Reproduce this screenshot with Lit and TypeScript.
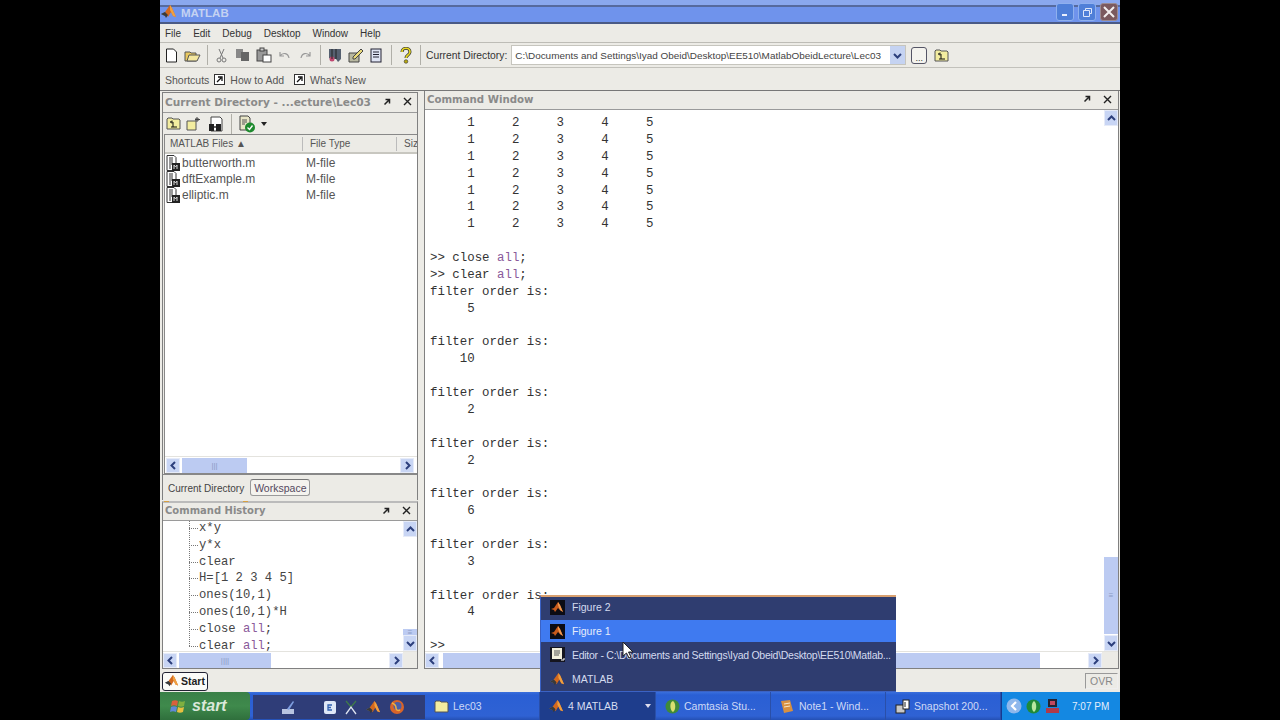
import { LitElement, html, css, svg } from "lit";
import { customElement } from "lit/decorators.js";

const matlab = (s = 16) => html`<svg class="ic" width=${s} height=${s} viewBox="0 0 16 16"><path d="M0 10l4-2 2 2-2 2z" fill="#6a7a8a"/><path d="M4 8l5-7 2 3 4 9-3-1-2-4-3 5-1-2z" fill="#d2681e"/><path d="M9 1l2 3 4 9-3-1-3-6z" fill="#f0a040"/><path d="M4 8l3 3-2 3-1-2-4-2z" fill="#3a3a3a"/></svg>`;
const figIcon = () => html`<svg class="ic" width="15" height="15" viewBox="0 0 15 15"><rect width="15" height="15" fill="#0c0c14"/><path d="M1 9l3-1 4-6 2 3 3 7-3-2-2-2-3 4-1-2z" fill="#c85a1c"/><path d="M8 2l2 3 3 7-3-2-2-5z" fill="#f09a50"/></svg>`;
const edIcon = () => html`<svg class="ic" width="15" height="15" viewBox="0 0 15 15"><rect width="15" height="15" fill="#15151f"/><rect x="2" y="1" width="10" height="11" fill="#f2efdc"/><path d="M4 4h6M4 6h6M4 8h5" stroke="#555" fill="none"/><path d="M11 13h3v-2" stroke="#fff" fill="none"/></svg>`;
const fileIcon = () => html`<svg class="ic" width="16" height="16" viewBox="0 0 16 16"><path d="M2 .5h7l2 2v13H2z" fill="#fff" stroke="#333"/><path d="M4 3h4M4 5h4M4 7h4M4 9h3M4 11h2M4 13h2" stroke="#333"/><rect x="7" y="8" width="8" height="8" fill="#222"/><path d="M9 14v-4l1.500 2 1.500-2v4" stroke="#d8d8d8" fill="none"/></svg>`;
const folder = (up = true, s = 15) => html`<svg class="ic" width=${s} height=${s} viewBox="0 0 15 15"><path d="M1 3l1-1h4l1 1h6l1 1v9H1z" fill="#f3eda0" stroke="#555"/>${up ? svg`<path d="M7 11V6H4.500M4.500 6L6 4.500M4.500 6L6 7.500" stroke="#111" fill="none"/><path d="M5 11h6" stroke="#111"/>` : ""}</svg>`;
const newFolder = () => html`<svg class="ic" width="15" height="15" viewBox="0 0 15 15"><path d="M1 5h9v9H1z" fill="#f3eda0" stroke="#555"/><path d="M11 1v5M9 3.500h5M9.500 2l3 3M12.500 2l-3 3" stroke="#444"/></svg>`;
const binoc = () => html`<svg class="ic" width="16" height="16" viewBox="0 0 16 16"><path d="M3 1h9l2 2v12H3z" fill="#fff" stroke="#444"/><path d="M1 8h5v7H1zM8 8h5v7H8z" fill="#222"/><path d="M6 10h2v2H6z" fill="#666"/></svg>`;
const checkDoc = () => html`<svg class="ic" width="18" height="18" viewBox="0 0 18 18"><path d="M2 1h8l2 2v12H2z" fill="#e8e6c8" stroke="#444"/><path d="M4 5h5M4 7h5M4 9h3" stroke="#555"/><circle cx="12" cy="12.500" r="5" fill="#1e8a2e"/><path d="M9.500 12.500l2 2 3-4" stroke="#fff" stroke-width="1.300" fill="none"/></svg>`;
const undock = () => html`<svg class="ic" width="8" height="8" viewBox="0 0 8 8"><path d="M1.500 6.500L6 2M2.500 1.500H6.500V5.500" stroke="#222" stroke-width="1.500" fill="none"/></svg>`;
const closeX = () => html`<svg class="ic" width="9" height="9" viewBox="0 0 9 9"><path d="M1 1l7 7M8 1L1 8" stroke="#222" stroke-width="1.400"/></svg>`;
const chev = (d: string) => {
  const p: Record<string, string> = { l: "M6 1L2.500 4.500 6 8", r: "M3 1l3.500 3.500L3 8", u: "M1 6l3.500-3.500L8 6", d: "M1 3l3.500 3.500L8 3" };
  return html`<svg class="ic" width="9" height="9" viewBox="0 0 9 9"><path d=${p[d]} stroke="#2c3f7c" stroke-width="2" fill="none"/></svg>`;
};
const link = () => html`<svg class="ic" width="11" height="11" viewBox="0 0 11 11"><rect x=".5" y=".5" width="10" height="10" fill="#fff" stroke="#333"/><path d="M3 8l4-4M4 3h4v4" stroke="#111" stroke-width="1.300" fill="none"/></svg>`;

const row = "     1     2     3     4     5";
const block = (n: string) => html`<div>filter order is:</div><div>${n}</div><div>&nbsp;</div>`;

@customElement("app-root")
export class AppRoot extends LitElement {
  static styles = css`
    :host { display: block; width: 1280px; height: 720px; background: #000; overflow: hidden; }
    .ic { display: block; flex: none; }
    .screen { position: relative; width: 960px; height: 720px; margin: 0 auto; background: #ecebe6; display: flex; flex-direction: column; font: 11px "Liberation Sans", sans-serif; color: #333; }
    .title { height: 24px; flex: none; box-sizing: border-box; background: linear-gradient(#8aa8ee 0, #8aa8ee 5px, #566a9e 5px, #566a9e 7px, #6f93ec 7px, #6f93ec 22px, #4a5a85 22px); display: flex; align-items: center; padding: 0 2px 0 1px; gap: 4px; color: #c4d2f2; font: bold 11.500px "Liberation Sans", sans-serif; }
    .title .name { flex: 1; padding-top: 2px; }
    .wbtn { width: 18px; height: 18px; border-radius: 3px; background: #4f7fd8; border: 1px solid #8fb0ee; box-sizing: border-box; display: flex; align-items: center; justify-content: center; }
    .wbtn.x { background: #7b5a5e; border-color: #9a8a90; }
    .menu { height: 19px; flex: none; display: flex; align-items: center; gap: 12px; padding: 0 5px; font-size: 10px; color: #333; border-bottom: 1px solid #bdbcb6; box-sizing: border-box; }
    .tools { height: 25px; flex: none; display: flex; align-items: center; padding: 0 3px; gap: 4px; border-bottom: 1px solid #c2c1bb; box-sizing: border-box; font-size: 10.300px; }
    .sep { width: 1px; height: 20px; background: #b0afa8; flex: none; margin: 0 1.500px; }
    .tico { width: 17px; height: 17px; flex: none; display: flex; align-items: center; justify-content: center; }
    .dir { width: 395px; height: 20px; margin-left: 0; background: #fff; border: 1px solid #c6c5be; box-sizing: border-box; display: flex; align-items: center; padding-left: 3px; white-space: nowrap; overflow: hidden; font-size: 9.950px; color: #444; justify-content: space-between; flex: none; }
    .combo { width: 15px; height: 18px; background: #c5d3f2; display: flex; align-items: center; justify-content: center; flex: none; }
    .dots { width: 14px; height: 15px; margin-left: 1px; border: 1px solid #556; border-radius: 3px; background: #f4f3ee; font-size: 9px; display: flex; align-items: flex-end; justify-content: center; flex: none; }
    .upf { margin-left: 3px; }
    .short { height: 23px; flex: none; display: flex; align-items: center; gap: 5px; padding: 1px 5px 0; color: #555; border-bottom: 1px solid #777; box-sizing: border-box; font-size: 10.500px; }
    .short .gap { width: 0; }
    .main { flex: 1; min-height: 0; display: flex; gap: 6px; padding: 0 1px 1px 2px; }
    .left { width: 256px; flex: none; display: flex; flex-direction: column; padding-top: 1px; box-sizing: border-box; }
    .right { flex: 1; min-width: 0; display: flex; flex-direction: column; border: 1px solid #808080; border-top: 0; box-sizing: border-box; }
    .head { height: 19px; flex: none; box-sizing: border-box; display: flex; align-items: center; padding: 0 6px 2px 2px; font: bold 10.200px "DejaVu Sans", sans-serif; color: #8a8a8a; gap: 12px; border-bottom: 1px solid #9a9a9a; white-space: nowrap; overflow: hidden; }
    .head.cd { height: 20px; font-size: 10.600px; }
    .head.ch { height: 18px; font-size: 10px; }
    .head .t { flex: 1; }
    .cwin { flex: 1; min-height: 0; display: flex; background: #fff; }
    .cmd { flex: 1; overflow: hidden; padding: 5px 0 0 5px; font: 12.420px/16.870px "Liberation Mono", monospace; color: #333; white-space: pre; }
    .cmd .p, .hist .p { color: #8a5a9a; }
    .vbar { width: 14px; flex: none; display: flex; flex-direction: column; background: #fff; }
    .vbar .grow { flex: 1; }
    .btn { width: 14px; height: 16px; flex: none; background: #c8d5f4; border: 1px solid #e6ebf8; box-sizing: border-box; display: flex; align-items: center; justify-content: center; }
    .thumb { background: #bccbf2; display: flex; align-items: center; justify-content: center; color: #8a9ac4; font-size: 8px; flex: none; }
    .hbar { height: 17px; flex: none; display: flex; background: #fff; align-items: center; border-top: 1px solid #e4e3de; box-sizing: border-box; }
    .hbar.tbl { padding: 0 3px 0 1px; }
    .hbar .grow { flex: 1; }
    .hbar .btn { height: 15px; }
    .hbar .thumb { height: 15px; margin-left: 2px; }
    .hbar .thumb.wide { margin-left: 4px; }
    .corner { width: 16px; height: 16px; flex: none; background: #ecebe6; }
    .corner.n { width: 14px; }
    .filepanel { height: 408px; flex: none; display: flex; flex-direction: column; border: 1px solid #808080; box-sizing: border-box; border-bottom: 0; }
    .ptools { height: 21px; flex: none; display: flex; align-items: center; gap: 5px; padding: 0 3px; }
    .shift { margin-left: 2px; }
    .table { flex: 1; min-height: 0; margin-left: 1px; display: flex; flex-direction: column; background: #fff; border: 1px solid #888; border-right: 0; }
    .thead { height: 19px; flex: none; box-sizing: border-box; background: #ecebe6; border-bottom: 2px solid #c8c7c0; display: grid; grid-template-columns: 138px 94px 1fr; align-items: center; font-size: 10px; color: #555; }
    .thead div { padding-left: 7px; border-right: 1px solid #bbb; white-space: nowrap; overflow: hidden; height: 14px; line-height: 14px; }
    .thead div:first-child { padding-left: 5px; }
    .thead div:last-child { border: 0; }
    .flist { flex: 1; padding-top: 1px; }
    .frow { height: 16px; display: grid; grid-template-columns: 141px 1fr; align-items: center; font-size: 12px; color: #555; }
    .fname { display: flex; align-items: center; gap: 1px; }
    .tabs { height: 26px; flex: none; display: flex; align-items: flex-start; padding-left: 1px; border-top: 1px solid #888; font-size: 10px; color: #444; box-sizing: border-box; }
    .tab { height: 20px; padding: 1px 4px 0 4px; box-sizing: border-box; white-space: nowrap; margin-top: 7px; position: relative; }
    .tab:not(.off)::after { content: ""; position: absolute; left: 0; right: 0; bottom: 0; height: 1px; background: linear-gradient(90deg, #d8a040 5px, transparent 5px, transparent calc(100% - 5px), #d8a040 calc(100% - 5px)); }
    .tab.off { border: 1px solid #9a9a9a; border-radius: 3px; border-top: 1px solid #777; padding: 2px 3px; height: 17px; background: #f4f3ee; margin: 4px 0 0 2px; color: #554a60; font-size: 10.500px; }
    .histpanel { flex: 1; min-height: 0; display: flex; flex-direction: column; border: 1px solid #808080; border-top: 2px solid #bbb; box-sizing: border-box; margin-top: 1px; }
    .hwin { flex: 1; min-height: 0; display: flex; background: #fff; }
    .hist { flex: 1; overflow: hidden; font: 12.200px/16.800px "Liberation Mono", monospace; color: #444; padding-left: 36px; position: relative; }
    .hist div { position: relative; white-space: pre; }
    .hist div:first-of-type { margin-top: -1px; }
    .hist div::before { content: ""; position: absolute; left: -10px; top: 8px; width: 9px; border-top: 1px dotted #777; }
    .tree { position: absolute; left: 26px; top: 0; bottom: 5px; border-left: 1px dotted #777; }
    .status { height: 22px; flex: none; display: flex; align-items: center; justify-content: space-between; padding: 0 2px 0 2px; box-sizing: border-box; }
    .startbtn { height: 19px; width: 46px; box-sizing: border-box; border: 1px solid #223; border-radius: 3px; background: #fbfbf8; display: flex; align-items: center; gap: 2px; padding-left: 2px; font-weight: bold; font-size: 10.500px; color: #222; }
    .ovr { width: 33px; height: 16px; box-sizing: border-box; border: 1px solid #999; border-right-color: #eee; border-bottom-color: #eee; font-size: 10.500px; color: #888; display: flex; align-items: center; justify-content: center; }
    .task { height: 28px; flex: none; display: flex; background: linear-gradient(#3a6fdc 0, #2a5fd4 3px, #2f62d4 24px, #2450b4); color: #cfdaf6; font-size: 10.500px; align-items: stretch; }
    .start { width: 90px; flex: none; background: linear-gradient(#3a8048, #3f8a4c 50%, #2f6f3c); display: flex; align-items: center; gap: 5px; padding-left: 10px; box-sizing: border-box; color: #dbe8da; font: italic bold 16px "Liberation Sans", sans-serif; border-radius: 0 4px 4px 0; }
    .ql { width: 172px; flex: none; margin: 3px 0 1px 3px; background: #2f3d78; display: flex; align-items: center; gap: 8px; padding-left: 28px; box-sizing: border-box; }
    .qgap { width: 11px; flex: none; }
    .tb { flex: none; width: 115px; display: flex; align-items: center; gap: 4px; padding-left: 9px; box-sizing: border-box; white-space: nowrap; border-right: 1px solid #2a4fa8; overflow: hidden; }
    .tb.act { background: #1e3d8c; width: 116px; color: #d7def0; padding-right: 4px; }
    .tb.act .grow { flex: 1; }
    .tray { flex: 1; background: #1488e2; display: flex; align-items: center; gap: 4px; padding-left: 4px; box-sizing: border-box; color: #e4eefc; font-size: 10px; border-left: 1px solid #153a90; }
    .tray .time { margin-left: 8px; white-space: nowrap; }
    .popup { position: absolute; left: 380px; top: 595px; width: 356px; height: 97px; background: #2f3d70; border-top: 2px solid #d8a070; border-left: 1px solid #3b62c4; border-bottom: 1px solid #3b62c4; box-sizing: border-box; color: #d4dbef; font-size: 10.500px; display: flex; flex-direction: column; }
    .pi { height: 24px; flex: none; box-sizing: border-box; display: flex; align-items: center; gap: 7px; padding-left: 9px; white-space: nowrap; }
    .pi.first { height: 23px; padding-bottom: 3px; }
    .pi.sel { height: 22px; background: #3f7af0; color: #e6ecfb; }
    .pi.ed { height: 25px; letter-spacing: -.27px; }
    .cursor { position: absolute; left: 462px; top: 641px; }
  `;

  render() {
    return html`<div class="screen">
      <div class="title">${matlab(16)}<span class="name">MATLAB</span>
        <span class="wbtn"><svg width="9" height="9" viewBox="0 0 9 9"><rect x="1" y="6" width="5" height="2" fill="#e8eefc"/></svg></span>
        <span class="wbtn"><svg width="11" height="11" viewBox="0 0 11 11"><path d="M3.500 3V1.500h6v5H8M1.500 3.500h6v6h-6z" stroke="#dde6fa" fill="none"/></svg></span>
        <span class="wbtn x"><svg width="12" height="12" viewBox="0 0 12 12"><path d="M1 1l10 10M11 1L1 11" stroke="#f2eeee" stroke-width="2"/></svg></span>
      </div>
      <div class="menu"><span>File</span><span>Edit</span><span>Debug</span><span>Desktop</span><span>Window</span><span>Help</span></div>
      <div class="tools">
        <span class="tico"><svg width="13" height="15" viewBox="0 0 13 15"><path d="M1.500 1h7l3 3v10h-10z" fill="#fff" stroke="#222"/></svg></span>
        <span class="tico"><svg width="17" height="15" viewBox="0 0 17 15"><path d="M1 4h5l1 1h5v8H1z" fill="#e8c860" stroke="#555"/><path d="M3 13l2-6h11l-3 6z" fill="#f4e8a0" stroke="#555"/></svg></span>
        <span class="sep"></span>
        <span class="tico"><svg width="11" height="15" viewBox="0 0 11 15"><path d="M3 1l4 9M8 1L4 10" stroke="#777" fill="none"/><circle cx="3" cy="12" r="2" stroke="#777" fill="none"/><circle cx="8" cy="12" r="2" stroke="#777" fill="none"/></svg></span>
        <span class="tico"><svg width="16" height="14" viewBox="0 0 16 14"><path d="M1 1h7v9H1z" fill="#888"/><path d="M6 4h8v9H6z" fill="#666"/></svg></span>
        <span class="tico"><svg width="16" height="16" viewBox="0 0 16 16"><rect x="1" y="3" width="10" height="11" fill="#999" stroke="#444"/><rect x="4" y="1" width="4" height="3" fill="#ccc" stroke="#444"/><rect x="7" y="8" width="8" height="7" fill="#fff" stroke="#444"/></svg></span>
        <span class="tico"><svg width="13" height="10" viewBox="0 0 13 10"><path d="M2 2v4h4M2 6c3-4 8-3 9 2" stroke="#999" stroke-width="1.200" fill="none"/></svg></span>
        <span class="tico"><svg width="13" height="10" viewBox="0 0 13 10"><path d="M11 2v4H7M11 6C8 2 3 3 2 8" stroke="#999" stroke-width="1.200" fill="none"/></svg></span>
        <span class="sep"></span>
        <span class="tico"><svg width="14" height="15" viewBox="0 0 14 15"><path d="M1 1h12v10l-3 3-2-3H3l-2-1z" fill="#556070"/><circle cx="4" cy="11" r="2.500" fill="#c04870"/><path d="M4 1v10M8 1v10" stroke="#222"/></svg></span>
        <span class="tico"><svg width="16" height="15" viewBox="0 0 16 15"><path d="M1 5h10v9H1z" fill="#b8b8a0" stroke="#444"/><path d="M5 9l8-8 2 2-8 8H5z" fill="#e8d878" stroke="#444"/></svg></span>
        <span class="tico"><svg width="13" height="15" viewBox="0 0 13 15"><rect x="1" y="1" width="10" height="13" fill="#dfe4f4" stroke="#223"/><path d="M3 4h6M3 6.500h6M3 9h6" stroke="#223"/></svg></span>
        <span class="sep"></span>
        <span class="tico"><svg width="12" height="17" viewBox="0 0 12 17"><path d="M2 5c0-5 8-5 8 0 0 3-4 3-4 6" stroke="#333" stroke-width="3" fill="none"/><path d="M2 5c0-5 8-5 8 0 0 3-4 3-4 6" stroke="#e8d820" stroke-width="1.600" fill="none"/><circle cx="6" cy="14.500" r="1.800" fill="#b8a810" stroke="#333" stroke-width=".6"/></svg></span>
        <span class="sep"></span>
        <span>Current Directory:</span>
        <div class="dir"><span>C:\\Documents and Settings\\Iyad Obeid\\Desktop\\EE510\\MatlabObeidLecture\\Lec03</span><span class="combo">${chev("d")}</span></div>
        <span class="dots">...</span>
        <span class="upf">${folder(true, 15)}</span>
      </div>
      <div class="short"><span>Shortcuts</span>${link()}<span>How to Add</span><span class="gap"></span>${link()}<span>What's New</span></div>
      <div class="main">
        <div class="left">
          <div class="filepanel">
            <div class="head cd"><span class="t">Current Directory - ...ecture\\Lec03</span>${undock()}${closeX()}</div>
            <div class="ptools">${folder(true)}${newFolder()}<span class="shift">${binoc()}</span><span class="sep"></span>${checkDoc()}<svg width="6" height="4" viewBox="0 0 6 4"><path d="M0 0h6L3 4z" fill="#222"/></svg></div>
            <div class="table">
              <div class="thead"><div>MATLAB Files ▲</div><div>File Type</div><div>Siz</div></div>
              <div class="flist">
                ${["butterworth.m", "dftExample.m", "elliptic.m"].map(n => html`<div class="frow"><span class="fname">${fileIcon()}${n}</span><span>M-file</span></div>`)}
              </div>
              <div class="hbar tbl"><span class="btn">${chev("l")}</span><span class="thumb" style="width:65px">|||</span><span class="grow"></span><span class="btn">${chev("r")}</span></div>
            </div>
            <div class="tabs"><span class="tab">Current Directory</span><span class="tab off">Workspace</span></div>
          </div>
          <div class="histpanel">
            <div class="head ch"><span class="t">Command History</span>${undock()}${closeX()}</div>
            <div class="hwin">
              <div class="hist"><span class="tree"></span>${["x*y", "y*x", "clear", "H=[1 2 3 4 5]", "ones(10,1)", "ones(10,1)*H"].map(l => html`<div>${l}</div>`)}<div>close <span class="p">all</span>;</div><div>clear <span class="p">all</span>;</div></div>
              <div class="vbar"><span class="btn">${chev("u")}</span><span class="grow"></span><span class="thumb" style="height:6px">≡</span><span class="btn">${chev("d")}</span></div>
            </div>
            <div class="hbar"><span class="btn">${chev("l")}</span><span class="thumb" style="width:92px">||||</span><span class="grow"></span><span class="btn">${chev("r")}</span><span class="corner n"></span></div>
          </div>
        </div>
        <div class="right">
          <div class="head"><span class="t">Command Window</span>${undock()}${closeX()}</div>
          <div class="cwin">
            <div class="cmd">${Array(7).fill(0).map(() => html`<div>${row}</div>`)}<div>&nbsp;</div><div>&gt;&gt; close <span class="p">all</span>;</div><div>&gt;&gt; clear <span class="p">all</span>;</div>${block("     5")}${block("    10")}${block("     2")}${block("     2")}${block("     6")}${block("     3")}${block("     4")}<div>&gt;&gt;</div></div>
            <div class="vbar"><span class="btn">${chev("u")}</span><span class="grow"></span><span class="thumb" style="height:77px;margin-bottom:1px">≡</span><span class="btn">${chev("d")}</span></div>
          </div>
          <div class="hbar"><span class="btn">${chev("l")}</span><span class="thumb wide" style="width:597px">||||</span><span class="grow"></span><span class="btn">${chev("r")}</span><span class="corner"></span></div>
        </div>
      </div>
      <div class="status"><div class="startbtn">${matlab(14)}<span>Start</span></div><div class="ovr">OVR</div></div>
      <div class="task">
        <div class="start"><svg width="17" height="17" viewBox="0 0 17 17"><path d="M2 3c2-1 4-1 6 0l-1 5c-2-1-4-1-6 0z" fill="#d8603c"/><path d="M9 3c2 1 4 1 6 0l-1 5c-2 1-4 1-6 0z" fill="#7fb040"/><path d="M1 9c2-1 4-1 6 0l-1 5c-2-1-4-1-6 0z" fill="#6088d8"/><path d="M8 9c2 1 4 1 6 0l-1 5c-2 1-4 1-6 0z" fill="#e8c040"/></svg><span>start</span></div>
        <div class="ql">
          <svg width="15" height="15" viewBox="0 0 15 15"><rect x="1" y="9" width="12" height="5" fill="#b8c4e0"/><path d="M6 9l6-8 1 1-5 8z" fill="#7f9fe0"/></svg>
          <span class="qgap"></span>
          <svg width="14" height="15" viewBox="0 0 14 15"><rect x="1" y="1" width="12" height="13" rx="2" fill="#dfe8f8"/><path d="M9 5H5v5h4M5 7.500h3" stroke="#3060b0" stroke-width="1.300" fill="none"/></svg>
          <svg width="13" height="15" viewBox="0 0 13 15"><path d="M1 1l5 6 5-6" stroke="#3f7a4a" stroke-width="1.300" fill="none"/><path d="M1 14l5-7 5 7" stroke="#dde3f0" stroke-width="1.300" fill="none"/></svg>
          ${matlab(15)}
          <svg width="16" height="16" viewBox="0 0 16 16"><circle cx="8" cy="8" r="7" fill="#d8642a"/><circle cx="8.500" cy="7" r="4" fill="#4a5fa8"/><path d="M3 4c3 1 4 3 4 5s2 3 4 2" stroke="#f0b040" stroke-width="1.500" fill="none"/></svg>
        </div>
        <div class="tb">${folder(false, 15)}<span>Lec03</span></div>
        <div class="tb act">${matlab(15)}<span>4 MATLAB</span><span class="grow"></span><svg width="6" height="4" viewBox="0 0 6 4"><path d="M0 0h6L3 4z" fill="#dde"/></svg></div>
        <div class="tb"><svg class="ic" width="15" height="15" viewBox="0 0 15 15"><circle cx="7.500" cy="7.500" r="7" fill="#3f8a3a"/><path d="M8 2c-4 1-3 10 0 11 3-2 3-9 0-11z" fill="#d8e070"/></svg><span>Camtasia Stu...</span></div>
        <div class="tb"><svg class="ic" width="15" height="15" viewBox="0 0 15 15"><path d="M1 2l9-1 3 11-9 2z" fill="#d89040"/><path d="M4 5l6-1M4 8l6-1" stroke="#f8e8c8"/></svg><span>Note1 - Wind...</span></div>
        <div class="tb"><svg class="ic" width="15" height="15" viewBox="0 0 15 15"><rect x="1" y="6" width="9" height="8" fill="#c8c8c8" stroke="#222"/><rect x="8" y="1" width="6" height="9" fill="#fff" stroke="#222"/><path d="M10 3v5" stroke="#222"/></svg><span>Snapshot 200...</span></div>
        <div class="tray">
          <svg width="16" height="18" viewBox="0 0 16 18"><circle cx="8" cy="9" r="7.500" fill="#8fb8ec"/><path d="M10 5L6 9l4 4" stroke="#fff" stroke-width="2.200" fill="none"/></svg>
          <svg width="15" height="15" viewBox="0 0 15 15"><circle cx="7.500" cy="7.500" r="7" fill="#1f8a3a"/><path d="M8 2c-3 2-3 9 0 11 3-2 3-9 0-11z" fill="#b8e8a0"/></svg>
          <svg width="15" height="16" viewBox="0 0 15 16"><rect x="3" y="1" width="9" height="8" fill="#223"/><rect x="5" y="3" width="5" height="4" fill="#c04860"/><rect x="1" y="10" width="13" height="5" fill="#b03a4a"/></svg>
          <span class="time">7:07 PM</span>
        </div>
      </div>
      <div class="popup">
        <div class="pi first">${figIcon()}<span>Figure 2</span></div>
        <div class="pi sel">${figIcon()}<span>Figure 1</span></div>
        <div class="pi ed">${edIcon()}<span>Editor - C:\\Documents and Settings\\Iyad Obeid\\Desktop\\EE510\\Matlab...</span></div>
        <div class="pi">${matlab(15)}<span>MATLAB</span></div>
      </div>
      <svg class="cursor" width="12" height="18" viewBox="0 0 12 18"><path d="M1 1v14l3.500-3 2.500 5 2-1-2.500-5H11z" fill="#fff" stroke="#222"/></svg>
    </div>`;
  }
}
